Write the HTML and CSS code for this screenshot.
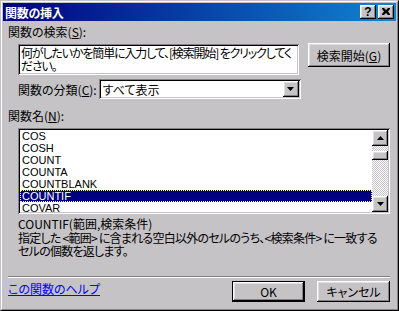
FILE: index.html
```html
<!DOCTYPE html>
<html lang="ja">
<head>
<meta charset="utf-8">
<link rel="stylesheet" href="styles.css">
</head>
<body>
<div class="window">
  <div class="frame">
    <div class="titlebar">
      <span class="title">関数の挿入</span>
      <div class="tbuttons">
        <span class="tbtn help">?</span>
        <span class="tbtn close"><svg width="8" height="7" viewBox="0 0 8 7"><path d="M0 0h2l2 2 2-2h2v1l-2 2.5 2 2.5v1h-2l-2-2-2 2h-2v-1l2-2.5-2-2.5z" fill="#000"/></svg></span>
      </div>
    </div>
    <div class="body">
      <div class="label l-search">関数の検索(<u>S</u>):</div>
      <div class="row search-row">
        <div class="field search-box">何がしたいかを簡単に入力して、[検索開始] をクリックしてく<br>ださい。</div>
        <div class="btn search-btn">検索開始(<u>G</u>)</div>
      </div>
      <div class="row cat-row">
        <span class="label">関数の分類(<u>C</u>):</span>
        <div class="field combo">
          <span class="combo-text">すべて表示</span>
          <span class="btn combo-arrow"><svg width="7" height="4" viewBox="0 0 7 4"><path d="M0 0h7l-3.5 4z" fill="#000"/></svg></span>
        </div>
      </div>
      <div class="label l-name">関数名(<u>N</u>):</div>
      <div class="field list">
        <ul class="items">
          <li>COS</li>
          <li>COSH</li>
          <li>COUNT</li>
          <li>COUNTA</li>
          <li>COUNTBLANK</li>
          <li class="sel">COUNTIF</li>
          <li>COVAR</li>
        </ul>
        <div class="scrollbar">
          <span class="btn sarrow"><svg width="7" height="4" viewBox="0 0 7 4"><path d="M3.5 0l3.5 4h-7z" fill="#000"/></svg></span>
          <div class="track"><span class="btn thumb"></span></div>
          <span class="btn sarrow"><svg width="7" height="4" viewBox="0 0 7 4"><path d="M0 0h7l-3.5 4z" fill="#000"/></svg></span>
        </div>
      </div>
      <div class="sig">COUNTIF(範囲,検索条件)</div>
      <div class="desc">指定した &lt;範囲&gt; に含まれる空白以外のセルのうち、&lt;検索条件&gt; に一致する<br>セルの個数を返します。</div>
      <div class="sep"></div>
      <div class="row footer">
        <a class="link" href="#">この関数のヘルプ</a>
        <div class="fbtns">
          <div class="default"><div class="btn ok">OK</div></div>
          <div class="btn cancel">キャンセル</div>
        </div>
      </div>
    </div>
  </div>
</div>
</body>
</html>
```

FILE: styles.css
```css
* { box-sizing: border-box; }
html, body { margin: 0; padding: 0; background: #c6c3c6; }
body {
  font-family: "Noto Sans CJK JP", "Noto Sans", sans-serif;
  font-size: 12px;
  line-height: 13px;
  color: #000;
  font-feature-settings: "palt";
}
u { text-decoration: underline; text-underline-offset: 1px; }
.window {
  width: 399px;
  height: 311px;
  border: 1px solid;
  border-color: #c6c3c6 #000 #000 #c6c3c6;
  background: #c6c3c6;
  overflow: hidden;
}
.frame {
  height: 100%;
  border: 1px solid;
  border-color: #fff #848284 #848284 #fff;
  padding: 1px;
  display: flex;
  flex-direction: column;
}
.titlebar {
  height: 18px;
  flex: none;
  background: linear-gradient(to right, #000080, #1084d0);
  display: flex;
  align-items: center;
  justify-content: space-between;
  padding: 0 2px 0 2px;
}
.title {
  color: #fff;
  font-weight: bold;
  font-size: 12px;
  letter-spacing: -0.3px;
}
.tbuttons { display: flex; gap: 2px; }
.tbtn {
  width: 16px;
  height: 14px;
  background: #c6c3c6;
  box-shadow: inset -1px -1px #000, inset 1px 1px #fff, inset -2px -2px #848284, inset 2px 2px #dfdfdf;
  display: flex;
  align-items: center;
  justify-content: center;
  font-family: "Liberation Sans", sans-serif;
  font-weight: bold;
  font-size: 12px;
  line-height: 12px;
  padding-bottom: 1px;
}
.body {
  flex: 1;
  display: flex;
  flex-direction: column;
  padding: 0 6px 0 5px;
}
.row { display: flex; }
.label { white-space: nowrap; }
.l-search { margin-top: 4px; }
.field {
  background: #fff;
  box-shadow: inset 1px 1px #848284, inset -1px -1px #fff, inset 2px 2px #000, inset -2px -2px #c6c3c6;
}
.btn {
  background: #c6c3c6;
  box-shadow: inset -1px -1px #000, inset 1px 1px #fff, inset -2px -2px #848284, inset 2px 2px #dfdfdf;
}
.search-row {
  margin-top: 6px;
  padding-left: 10px;
  align-items: flex-start;
  justify-content: space-between;
}
.search-box {
  width: 281px;
  height: 31px;
  padding: 2px 3px;
  line-height: 13px;
  white-space: nowrap;
  letter-spacing: -1.15px;
  overflow: hidden;
}
.search-btn {
  width: 82px;
  height: 24px;
  margin-top: -1px;
  display: flex;
  align-items: center;
  justify-content: center;
}
.cat-row {
  margin-top: 4px;
  padding-left: 10px;
  align-items: center;
  gap: 2px;
}
.combo {
  width: 202px;
  height: 20px;
  display: flex;
  align-items: center;
  justify-content: space-between;
  padding: 2px;
}
.combo-text { padding-left: 2px; }
.combo-arrow {
  width: 16px;
  height: 16px;
  display: flex;
  align-items: center;
  justify-content: center;
}
.l-name { margin-top: 10px; }
.list {
  margin: 6px 0 0 10px;
  height: 86px;
  display: flex;
  padding: 2px;
}
.items {
  list-style: none;
  margin: 0;
  padding: 0;
  flex: 1;
}
.items li {
  height: 12px;
  line-height: 12px;
  padding-left: 2px;
  font-family: "Liberation Sans", sans-serif;
  font-size: 11px;
}
.items li.sel {
  background: #000080;
  color: #fff;
  outline: 1px dotted #ffff60;
  outline-offset: -1px;
}
.scrollbar {
  width: 16px;
  display: flex;
  flex-direction: column;
}
.sarrow {
  height: 16px;
  flex: none;
  display: flex;
  align-items: center;
  justify-content: center;
}
.track {
  flex: 1;
  background-image: conic-gradient(#fff 25%, #c6c3c6 0 50%, #fff 0 75%, #c6c3c6 0);
  background-size: 2px 2px;
  padding-top: 5px;
}
.thumb {
  display: block;
  height: 9px;
}
.sig { margin-top: 3px; padding-left: 10px; }
.desc {
  margin-top: 1px;
  padding-left: 10px;
  line-height: 13px;
  letter-spacing: -0.75px;
  white-space: nowrap;
}
.sep {
  margin-top: 19px;
  height: 2px;
  flex: none;
  border-top: 1px solid #848284;
  border-bottom: 1px solid #fff;
}
.footer {
  margin-top: 3px;
  justify-content: space-between;
  align-items: flex-start;
}
.link {
  color: #0000ff;
  text-decoration: underline;
  margin-top: 1px;
}
.fbtns { display: flex; gap: 12px; }
.default { border: 1px solid #000; }
.ok, .cancel {
  height: 21px;
  display: flex;
  align-items: center;
  justify-content: center;
}
.ok { width: 71px; height: 19px; }
.cancel { width: 73px; }
```
